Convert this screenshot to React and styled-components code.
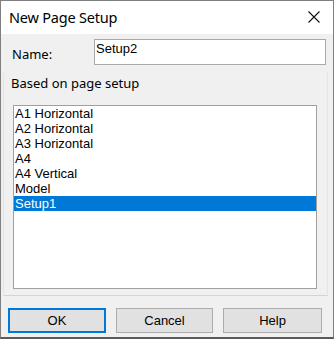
import React from "react";
import styled, { createGlobalStyle } from "styled-components";

const GlobalStyle = createGlobalStyle`
  html, body {
    margin: 0;
    padding: 0;
    background: #f0f0f0;
  }
  * {
    box-sizing: border-box;
  }
`;

const pages = [
  "A1 Horizontal",
  "A2 Horizontal",
  "A3 Horizontal",
  "A4",
  "A4 Vertical",
  "Model",
  "Setup1",
];

const App = () => {
  return (
    <>
      <GlobalStyle />
      <Window>
        <TitleBar>
          <Title>New Page Setup</Title>
          <CloseButton aria-label="Close">
            <svg width="12" height="12" viewBox="0 0 12 12">
              <path d="M0.5 0.5 L11.5 11.5 M11.5 0.5 L0.5 11.5" stroke="#111" strokeWidth="1.1" fill="none" />
            </svg>
          </CloseButton>
        </TitleBar>
        <Body>
          <NameRow>
            <Label>Name:</Label>
            <NameInput defaultValue="Setup2" />
          </NameRow>
          <Group>
            <GroupLabel>Based on page setup</GroupLabel>
            <List>
              {pages.map((p) => (
                <ListItem key={p} $selected={p === "Setup1"}>
                  {p}
                </ListItem>
              ))}
            </List>
          </Group>
          <Footer>
            <Button $primary $width={98}>OK</Button>
            <Button $width={97}>Cancel</Button>
            <Button $width={99}>Help</Button>
          </Footer>
        </Body>
      </Window>
    </>
  );
};

export default App;

const Window = styled.div`
  width: 334px;
  height: 339px;
  border: 1px solid #7f7f7f;
  border-bottom: 2px solid #5a5a5a;
  background: #f0f0f0;
  display: flex;
  flex-direction: column;
  font-family: "Liberation Sans", Arial, sans-serif;
  color: #000;
`;

const TitleBar = styled.div`
  height: 33px;
  background: #fff;
  display: flex;
  align-items: center;
  justify-content: space-between;
  padding: 0 13px 0 8px;
`;

const Title = styled.div`
  font-family: "Noto Sans", sans-serif;
  font-size: 14.5px;
  letter-spacing: -0.2px;
  margin-top: -1px;
`;

const CloseButton = styled.div`
  display: flex;
  align-items: center;
  margin-top: -1px;
`;

const Body = styled.div`
  flex: 1;
  display: flex;
  flex-direction: column;
`;

const NameRow = styled.div`
  display: flex;
  align-items: center;
  margin-top: 5px;
  padding-left: 11px;
`;

const Label = styled.div`
  width: 82px;
  font-family: "Noto Sans", sans-serif;
  font-size: 13px;
  padding-top: 3px;
`;

const NameInput = styled.input`
  width: 232px;
  height: 26px;
  border: 1px solid #a9a9a9;
  background: #fff;
  font-family: "Liberation Sans", Arial, sans-serif;
  font-size: 13px;
  padding: 0 0 8px 1px;
  outline: none;
`;

const Group = styled.div`
  margin: 7px 5px 0 2px;
  height: 224px;
  border: 1px solid #e4e4e4;
  border-top-color: #f0f0f0;
  border-bottom-color: #d4d4d4;
  display: flex;
  flex-direction: column;
`;

const GroupLabel = styled.div`
  font-family: "Noto Sans", sans-serif;
  font-size: 13px;
  line-height: 16px;
  padding-left: 7px;
  margin-top: 2px;
`;

const List = styled.div`
  margin: 14px 0 0 9px;
  width: 304px;
  height: 184px;
  border: 1px solid #a0a0a0;
  background: #fff;
  padding: 0;
`;

const ListItem = styled.div`
  height: 15px;
  line-height: 15px;
  font-size: 13px;
  padding-left: 1px;
  white-space: nowrap;
  background: ${(p) => (p.$selected ? "#0078d7" : "transparent")};
  color: ${(p) => (p.$selected ? "#fff" : "#000")};
`;

const Footer = styled.div`
  display: flex;
  gap: 10px;
  padding: 12px 0 0 7px;
`;

const Button = styled.button`
  width: ${(p) => p.$width}px;
  height: 25px;
  background: #e1e1e1;
  border: ${(p) => (p.$primary ? "2px solid #0078d7" : "1px solid #adadad")};
  font-family: "Liberation Sans", Arial, sans-serif;
  font-size: 13px;
  color: #000;
  padding: 0;
`;
